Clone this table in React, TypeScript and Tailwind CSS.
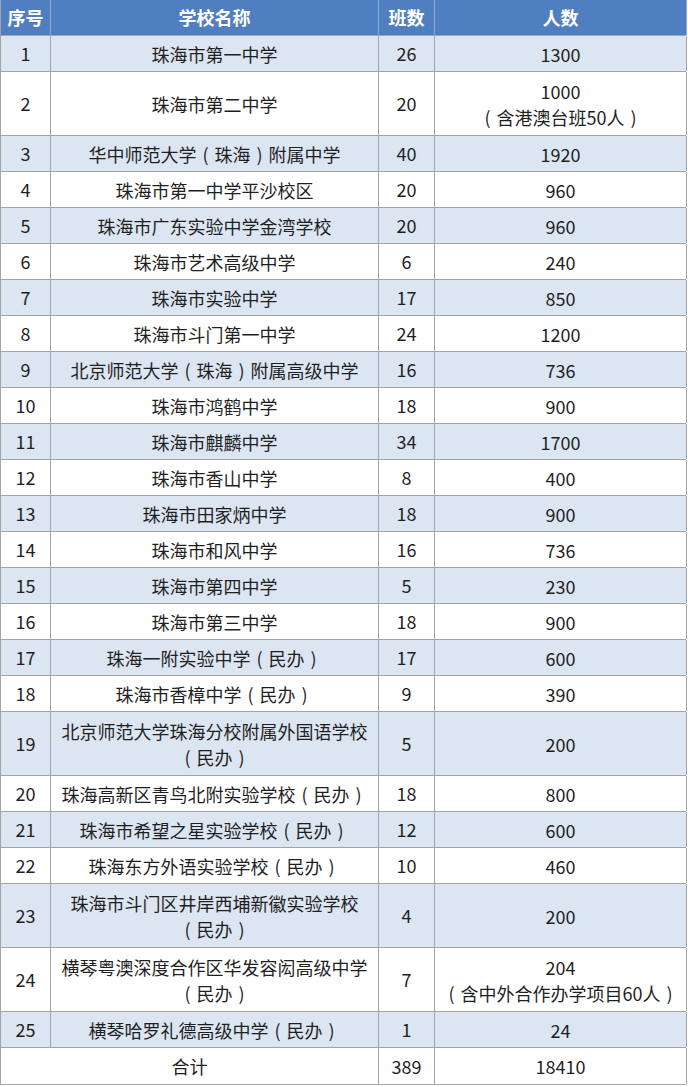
import React from "react";

type Row = [string, string[], string, string[]];

const rows: Row[] = [
  ["1", ["珠海市第一中学"], "26", ["1300"]],
  ["2", ["珠海市第二中学"], "20", ["1000", "（含港澳台班50人）"]],
  ["3", ["华中师范大学（珠海）附属中学"], "40", ["1920"]],
  ["4", ["珠海市第一中学平沙校区"], "20", ["960"]],
  ["5", ["珠海市广东实验中学金湾学校"], "20", ["960"]],
  ["6", ["珠海市艺术高级中学"], "6", ["240"]],
  ["7", ["珠海市实验中学"], "17", ["850"]],
  ["8", ["珠海市斗门第一中学"], "24", ["1200"]],
  ["9", ["北京师范大学（珠海）附属高级中学"], "16", ["736"]],
  ["10", ["珠海市鸿鹤中学"], "18", ["900"]],
  ["11", ["珠海市麒麟中学"], "34", ["1700"]],
  ["12", ["珠海市香山中学"], "8", ["400"]],
  ["13", ["珠海市田家炳中学"], "18", ["900"]],
  ["14", ["珠海市和风中学"], "16", ["736"]],
  ["15", ["珠海市第四中学"], "5", ["230"]],
  ["16", ["珠海市第三中学"], "18", ["900"]],
  ["17", ["珠海一附实验中学（民办）"], "17", ["600"]],
  ["18", ["珠海市香樟中学（民办）"], "9", ["390"]],
  ["19", ["北京师范大学珠海分校附属外国语学校", "（民办）"], "5", ["200"]],
  ["20", ["珠海高新区青鸟北附实验学校（民办）"], "18", ["800"]],
  ["21", ["珠海市希望之星实验学校（民办）"], "12", ["600"]],
  ["22", ["珠海东方外语实验学校（民办）"], "10", ["460"]],
  ["23", ["珠海市斗门区井岸西埔新徽实验学校", "（民办）"], "4", ["200"]],
  ["24", ["横琴粤澳深度合作区华发容闳高级中学", "（民办）"], "7", ["204", "（含中外合作办学项目60人）"]],
  ["25", ["横琴哈罗礼德高级中学（民办）"], "1", ["24"]],
];

const font = { fontFamily: '"Noto Sans CJK SC", "Noto Sans", sans-serif' };

function Text({ s }: { s: string }) {
  const parts = s.split(/([（）])/);
  return (
    <span className="whitespace-nowrap">
      {parts.map((p, i) =>
        p === "（" ? (
          <span key={i} className="inline-block w-[18px] text-center">(</span>
        ) : p === "）" ? (
          <span key={i} className="inline-block w-[18px] text-center">)</span>
        ) : (
          <React.Fragment key={i}>{p}</React.Fragment>
        )
      )}
    </span>
  );
}

function Lines({ lines }: { lines: string[] }) {
  return (
    <div className="flex flex-col items-center leading-[26px]">
      {lines.map((l, i) => (
        <Text key={i} s={l} />
      ))}
    </div>
  );
}

export default function App() {
  return (
    <div className="w-[688px] h-[1087px] bg-white" style={font}>
      <div className="w-[686px] border-l border-[#a3a3a3] text-[18px] text-[#1f1f1f]">
        <div className="grid grid-cols-[50px_328px_56px_252px] h-[36px] bg-[#4f7fc0] text-white font-bold border-b border-[#9aa8bd]">
          <div className="flex items-center justify-center border-r border-[#8eaad6]">序号</div>
          <div className="flex items-center justify-center border-r border-[#8eaad6]">学校名称</div>
          <div className="flex items-center justify-center border-r border-[#8eaad6]">班数</div>
          <div className="flex items-center justify-center border-r border-[#8eaad6]">人数</div>
        </div>
        {rows.map(([no, name, cls, num], i) => {
          const tall = name.length > 1 || num.length > 1;
          return (
            <div
              key={no}
              className={`grid grid-cols-[50px_328px_56px_252px] border-b border-[#a3a3a3] ${
                tall ? "h-[64px]" : "h-[36px]"
              } ${i % 2 === 0 ? "bg-[#dce5f2]" : "bg-white"}`}
            >
              <div className="flex items-center justify-center border-r border-[#a3a3a3]">{no}</div>
              <div className="flex items-center justify-center border-r border-[#a3a3a3]">
                <Lines lines={name} />
              </div>
              <div className="flex items-center justify-center border-r border-[#a3a3a3]">{cls}</div>
              <div className="flex items-center justify-center border-r border-[#a3a3a3]">
                <Lines lines={num} />
              </div>
            </div>
          );
        })}
        <div className="grid grid-cols-[378px_56px_252px] h-[37px] bg-white border-b border-[#a3a3a3]">
          <div className="flex items-center justify-center border-r border-[#a3a3a3]">合计</div>
          <div className="flex items-center justify-center border-r border-[#a3a3a3]">389</div>
          <div className="flex items-center justify-center border-r border-[#a3a3a3]">18410</div>
        </div>
      </div>
    </div>
  );
}
